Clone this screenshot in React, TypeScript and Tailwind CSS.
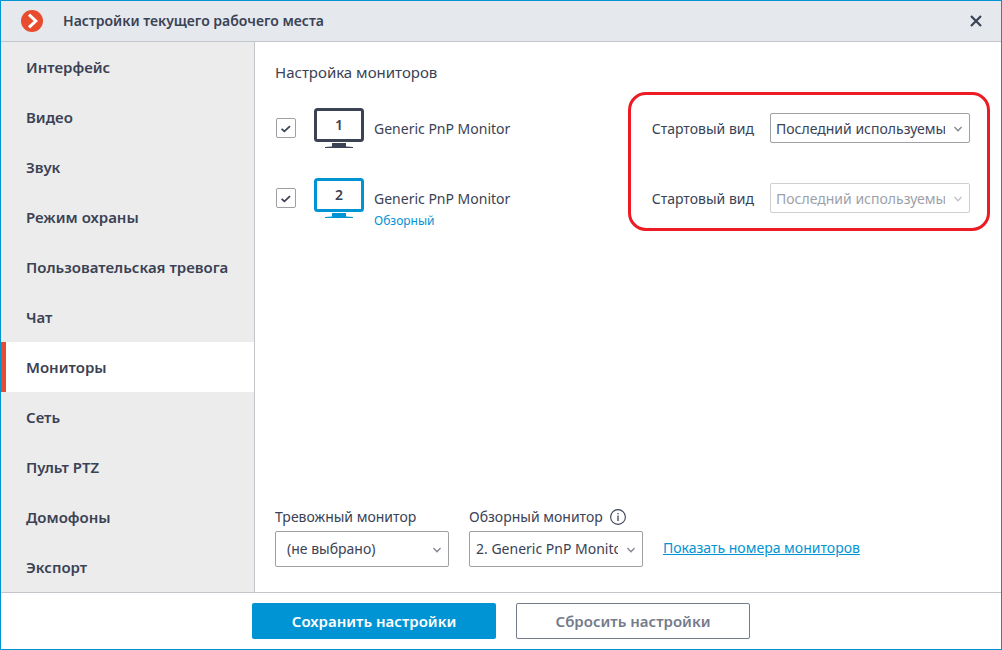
import { useState } from "react";
import clsx from "clsx";

const sections = [
  "Интерфейс",
  "Видео",
  "Звук",
  "Режим охраны",
  "Пользовательская тревога",
  "Чат",
  "Мониторы",
  "Сеть",
  "Пульт PTZ",
  "Домофоны",
  "Экспорт",
];

const monitors = [
  { id: 1, name: "Generic PnP Monitor", overview: false },
  { id: 2, name: "Generic PnP Monitor", overview: true },
];

type DropdownProps = {
  id: string;
  options: string[];
  disabled?: boolean;
  className?: string;
};

function Dropdown({ id, options, disabled, className }: DropdownProps) {
  return (
    <div className={clsx("relative", disabled && "opacity-50")}>
      <select
        id={id}
        disabled={disabled}
        className={clsx(
          "block w-full appearance-none rounded-xs border border-[#a0a0a4] bg-white pr-6 text-[#3a4254]",
          className
        )}
      >
        {options.map((option) => (
          <option key={option}>{option}</option>
        ))}
      </select>
      <svg
        viewBox="0 0 8 6"
        className="pointer-events-none absolute top-0.5 right-2 bottom-0 my-auto h-1.5 w-2 text-[#80858f]"
        fill="none"
        stroke="currentColor"
        strokeWidth="1.3"
      >
        <path d="M.4 1L4 4.8 7.6 1" />
      </svg>
    </div>
  );
}

function MonitorIcon({ number, active }: { number: number; active: boolean }) {
  return (
    <svg
      viewBox="0 0 50 40"
      className={clsx("h-10 w-[50px] shrink-0", active ? "text-[#0094d4]" : "text-[#3a4254]")}
    >
      <rect x="1.5" y="1.5" width="47" height="31" rx="2" fill="none" stroke="currentColor" strokeWidth="3" />
      <path d="M18 35h14v3.4l7 .6v1H11v-1l7-.6z" fill="currentColor" />
      <text x="25" y="22" textAnchor="middle" className="fill-[#3a4254] text-sm font-semibold">
        {number}
      </text>
    </svg>
  );
}

function InfoIcon() {
  return (
    <svg viewBox="0 0 16 16" className="h-4 w-4 text-[#3a4254]" fill="none" stroke="currentColor">
      <circle cx="8" cy="8" r="7.4" strokeWidth="1.1" />
      <path d="M8 6.5v5.5M8 4v1.3" strokeWidth="1.3" />
    </svg>
  );
}

export default function App() {
  const [section, setSection] = useState("Мониторы");
  const [enabled, setEnabled] = useState<number[]>([1, 2]);

  const toggle = (id: number) =>
    setEnabled((prev) => (prev.includes(id) ? prev.filter((x) => x !== id) : [...prev, id]));

  return (
    <div className="flex min-h-screen flex-col border border-[#0094d4] bg-white font-['Noto_Sans',sans-serif] text-sm text-[#3a4254]">
      {/* Title bar */}
      <header className="flex h-[41px] items-center border-b border-[#c4c5cb] bg-[#e5e8ed] pr-[17px] pl-5">
        <svg viewBox="0 0 22 22" className="h-[22px] w-[22px]">
          <circle cx="11" cy="11" r="11" fill="#e94b2f" />
          <path d="M8 4.6l6.8 6.4L8 17.4" fill="none" stroke="#fff" strokeWidth="3" />
        </svg>
        <h1 className="ml-5 flex-1 font-semibold">Настройки текущего рабочего места</h1>
        <button type="button" aria-label="Закрыть" className="p-0.5">
          <svg viewBox="0 0 12 12" className="h-3 w-3" fill="none" stroke="currentColor" strokeWidth="2.2">
            <path d="M1 1l10 10M11 1L1 11" />
          </svg>
        </button>
      </header>

      <div className="flex flex-1">
        <nav className="w-[254px] shrink-0 border-r border-[#c4c5cb] bg-[#ececec]">
          {sections.map((name) => (
            <button
              key={name}
              type="button"
              onClick={() => setSection(name)}
              className={clsx(
                "block h-[50px] w-full border-l-5 pt-0.5 pl-5 text-left text-[15px] font-semibold",
                name === section ? "border-[#e94b2f] bg-white" : "border-transparent"
              )}
            >
              {name}
            </button>
          ))}
        </nav>

        <main className="flex flex-1 flex-col pt-[18px] pb-[25px] pl-5">
          <h2 className="text-[15px] leading-6">Настройка мониторов</h2>

          <div className="mt-2 flex items-start justify-between pr-[11px]">
            <ul className="pt-4">
              {monitors.map((m) => (
                <li key={m.id} className="flex h-[70px] items-start">
                  <label className="relative mt-2.5 ml-px block h-5 w-5">
                    <input
                      type="checkbox"
                      aria-label={`${m.id}. ${m.name}`}
                      checked={enabled.includes(m.id)}
                      onChange={() => toggle(m.id)}
                      className="peer block h-5 w-5 appearance-none rounded-xs border border-[#a0a0a4] bg-white"
                    />
                    <svg
                      viewBox="0 0 20 20"
                      className="pointer-events-none absolute inset-0 hidden h-5 w-5 peer-checked:block"
                      fill="none"
                      stroke="currentColor"
                      strokeWidth="1.8"
                    >
                      <path d="M5.6 10.8l2.8 2.5 5.6-5.2" />
                    </svg>
                  </label>
                  <div className="ml-[18px]">
                    <MonitorIcon number={m.id} active={m.overview} />
                  </div>
                  <div className="mt-[9px] ml-2.5">
                    <div className="leading-6">{m.name}</div>
                    {m.overview && <div className="text-xs leading-5 text-[#0094d4]">Обзорный</div>}
                  </div>
                </li>
              ))}
            </ul>

            <div className="flex flex-col gap-10 rounded-[18px] border-3 border-[#ed1c24] pt-[18px] pr-[17px] pb-[15px] pl-[21px]">
              {monitors.map((m) => (
                <div key={m.id} className="flex items-center justify-between gap-4">
                  <label htmlFor={`start-view-${m.id}`} className="pt-0.5">
                    Стартовый вид
                  </label>
                  <div className="w-[200px]">
                    <Dropdown
                      id={`start-view-${m.id}`}
                      options={["Последний используемый вид"]}
                      disabled={m.overview}
                      className="h-[30px] pt-px pl-[5px]"
                    />
                  </div>
                </div>
              ))}
            </div>
          </div>

          <div className="mt-auto flex items-end gap-5">
            <div className="w-[174px]">
              <label htmlFor="alarm-monitor" className="mb-0.5 block leading-6">
                Тревожный монитор
              </label>
              <Dropdown id="alarm-monitor" options={["(не выбрано)"]} className="h-9 pl-[11px]" />
            </div>
            <div className="w-[174px]">
              <div className="mb-0.5 flex items-center gap-[7px] leading-6">
                <label htmlFor="overview-monitor">Обзорный монитор</label>
                <InfoIcon />
              </div>
              <Dropdown
                id="overview-monitor"
                options={["2. Generic PnP Monitor", "1. Generic PnP Monitor"]}
                className="h-9 pl-1.5"
              />
            </div>
            <a href="#numbers" className="pb-px leading-9 text-[#0094d4] underline">
              Показать номера мониторов
            </a>
          </div>
        </main>
      </div>

      <footer className="flex justify-center gap-5 border-t border-[#c4c5cb] py-2.5 text-[15px] font-semibold">
        <button type="button" className="h-9 w-[244px] rounded-xs bg-[#0094d4] pt-0.5 text-white">
          Сохранить настройки
        </button>
        <button type="button" className="h-9 w-[234px] rounded-xs border border-[#747b8b] pt-0.5 text-[#747b8b]">
          Сбросить настройки
        </button>
      </footer>
    </div>
  );
}
